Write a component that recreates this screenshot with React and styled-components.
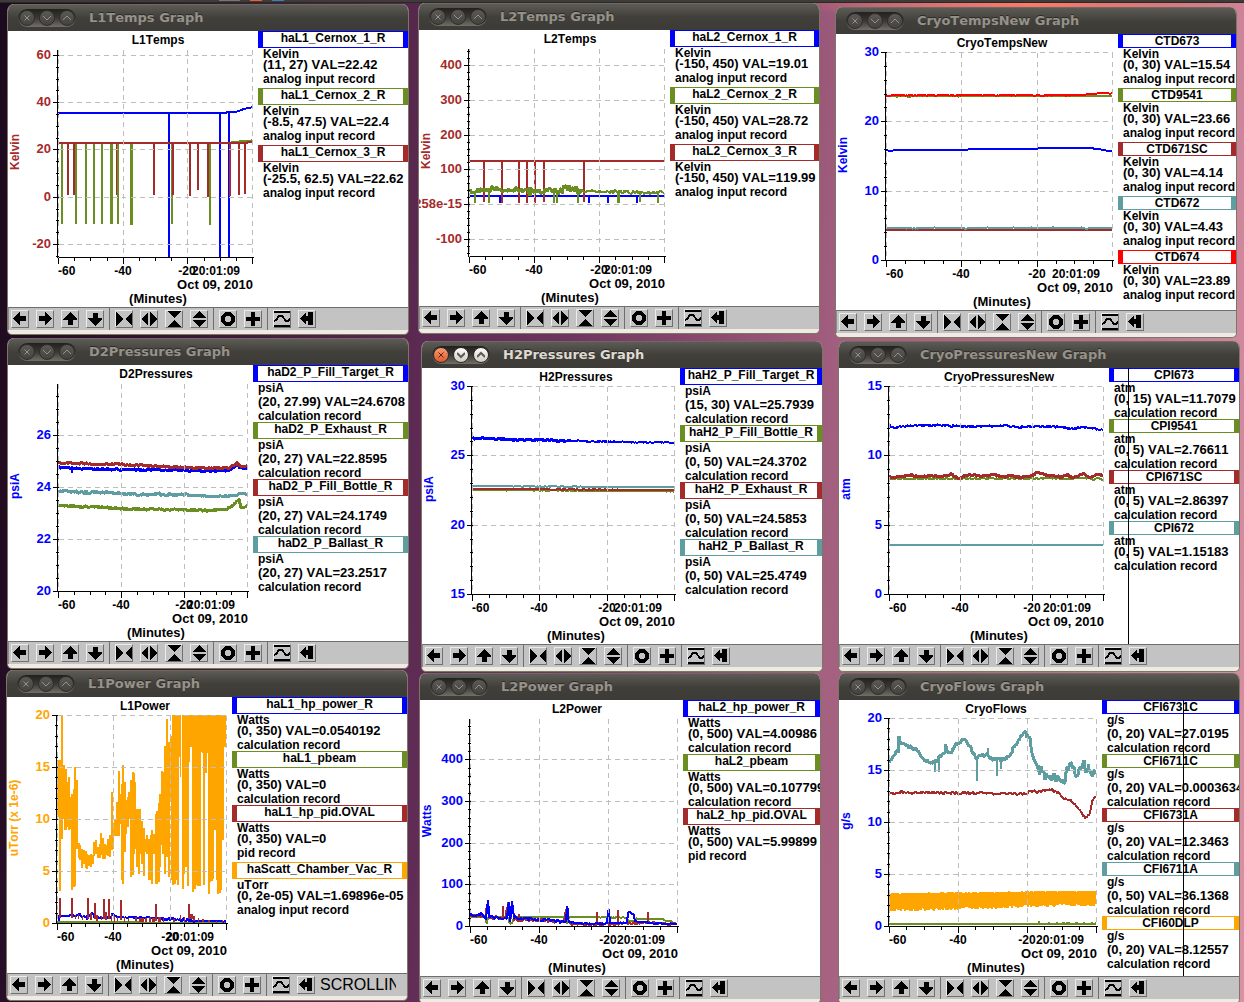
import React from 'react'
import styled, { createGlobalStyle } from 'styled-components';

const BLUE = '#0000ff';
const GREEN = '#6b8e23';
const BROWN = '#a52a2a';
const TEAL = '#5f9ea0';
const RED = '#ff0000';
const ORANGE = '#ffa500';

const CONTENT_WIDTH = 400;
const PLOT_LEFT = 50;
const PLOT_TOP = 18;
const PLOT_BOTTOM = 226;
const BODY_HEIGHT = 276;

// small repeatable noise so the traces look the same on every render
function makeRandom(seed) {
    let s = seed * 7919 + 17;
    return () => {
        s = (s * 1103515245 + 12345) % 2147483648;
        return s / 2147483648;
    };
}

function wiggle(points, noise, seed) {
    const random = makeRandom(seed);
    const out = [];
    for (let i = 0; i < points.length - 1; i++) {
        const [x1, y1] = points[i];
        const [x2, y2] = points[i + 1];
        for (let x = x1; x < x2; x += 3) {
            const y = y1 + ((y2 - y1) * (x - x1)) / (x2 - x1);
            out.push([x, y + (random() * 2 - 1) * noise]);
        }
    }
    out.push(points[points.length - 1]);
    return out;
}

const record = (name, color, unit, value, type) => ({ name, color, unit, value, type });

const AI = 'analog input record';
const CALC = 'calculation record';

// Trace points are stored in thirds of a pixel, `origin` is the plot corner in the same unit.
// bars: [x, top, bottom, width]
const graphs = [
    {
        title: 'L1Temps', left: 7, top: 4, legend: 150, origin: [174, 147],
        axis: { label: 'Kelvin', color: BROWN, min: -25.5, max: 62.5, step: 20, minor: 5 },
        records: [
            record('haL1_Cernox_1_R', BLUE, 'Kelvin', '(11, 27) VAL=22.42', AI),
            record('haL1_Cernox_2_R', GREEN, 'Kelvin', '(-8.5, 47.5) VAL=22.4', AI),
            record('haL1_Cernox_3_R', BROWN, 'Kelvin', '(-25.5, 62.5) VAL=22.62', AI),
        ],
        traces: [
            { color: BLUE, points: [[174, 339], [678, 339], [680, 336], [710, 335], [735, 326], [757, 322]], bars: [[507, 339, 771], [660, 339, 771], [687, 336, 771]] },
            {
                color: GREEN, points: [[174, 429], [694, 429], [696, 425], [740, 424], [757, 421]],
                bars: [[186, 429, 672], [228, 429, 672], [258, 429, 672], [282, 429, 672], [306, 429, 672], [334, 429, 672, 3], [354, 429, 672], [394, 429, 675, 3], [516, 429, 672], [630, 429, 675]],
            },
            {
                color: BROWN, points: [[174, 429], [741, 429], [744, 426], [757, 426]],
                bars: [[204, 429, 585], [222, 429, 585], [350, 429, 585, 1], [462, 429, 585], [519, 429, 585], [570, 429, 588], [594, 429, 570], [624, 429, 590], [690, 429, 588], [717, 429, 585], [735, 429, 582]],
            },
        ],
    },
    {
        title: 'L2Temps', left: 418, top: 3, legend: 149, origin: [162, 144],
        axis: { label: 'Kelvin', color: BROWN, min: -150, max: 450, step: 100, minor: 20, zero: '3.55258e-15' },
        records: [
            record('haL2_Cernox_1_R', BLUE, 'Kelvin', '(-150, 450) VAL=19.01', AI),
            record('haL2_Cernox_2_R', GREEN, 'Kelvin', '(-150, 450) VAL=28.72', AI),
            record('haL2_Cernox_3_R', BROWN, 'Kelvin', '(-150, 450) VAL=119.99', AI),
        ],
        traces: [
            { color: BLUE, points: [[162, 588], [748, 588]], bars: [[255, 588, 608], [522, 588, 608], [580, 588, 608], [666, 588, 608]] },
            { color: BROWN, points: [[162, 483], [748, 483]], bars: [[207, 483, 606], [261, 483, 608], [312, 483, 608], [336, 483, 608], [360, 483, 608], [387, 483, 605], [507, 483, 606]] },
            { color: GREEN, noise: 8, width: 3, points: [[162, 575], [200, 571], [240, 565], [280, 569], [310, 570], [330, 576], [360, 574], [400, 574], [430, 573]], bars: [[180, 575, 608], [222, 572, 608], [416, 572, 608], [426, 572, 608], [345, 562, 588, 4]] },
            { color: GREEN, noise: 13, width: 3, points: [[430, 573], [450, 566], [480, 568], [500, 572]], bars: [[489, 570, 608]] },
            { color: GREEN, noise: 5, points: [[500, 574], [600, 574], [640, 577], [748, 578]], bars: [[609, 574, 608, 3], [674, 576, 605], [730, 577, 610]] },
        ],
    },
    {
        title: 'CryoTempsNew', left: 835, top: 7, legend: 118, origin: [168, 156],
        axis: { label: 'Kelvin', color: BLUE, min: 0, max: 30, step: 10, minor: 2 },
        records: [
            record('CTD673', BLUE, 'Kelvin', '(0, 30) VAL=15.54', AI),
            record('CTD9541', GREEN, 'Kelvin', '(0, 30) VAL=23.66', AI),
            record('CTD671SC', BROWN, 'Kelvin', '(0, 30) VAL=4.14', AI),
            record('CTD672', TEAL, 'Kelvin', '(0, 30) VAL=4.43', AI),
            record('CTD674', RED, 'Kelvin', '(0, 30) VAL=23.89', AI),
        ],
        traces: [
            { color: BLUE, points: [[168, 450], [180, 453], [200, 450], [400, 450], [430, 447], [520, 446], [620, 446], [640, 443], [740, 443], [800, 446], [830, 452], [847, 452]] },
            { color: GREEN, noise: 1, points: [[168, 289], [847, 288]] },
            { color: BROWN, points: [[168, 690], [847, 690]] },
            { color: TEAL, noise: 2, points: [[168, 684], [847, 684]] },
            { color: RED, noise: 1, points: [[168, 288], [190, 286], [750, 286], [775, 283], [820, 279], [847, 281]] },
        ],
    },
    {
        title: 'D2Pressures', left: 7, top: 338, legend: 155, origin: [174, 144],
        axis: { label: 'psiA', color: BLUE, min: 20, max: 27.99, step: 2, minor: 0.5 },
        records: [
            record('haD2_P_Fill_Target_R', BLUE, 'psiA', '(20, 27.99) VAL=24.6708', CALC),
            record('haD2_P_Exhaust_R', GREEN, 'psiA', '(20, 27) VAL=22.8595', CALC),
            record('haD2_P_Fill_Bottle_R', BROWN, 'psiA', '(20, 27) VAL=24.1749', CALC),
            record('haD2_P_Ballast_R', TEAL, 'psiA', '(20, 27) VAL=23.2517', CALC),
        ],
        traces: [
            { color: BLUE, noise: 3, width: 3, points: [[174, 397], [230, 400], [360, 404], [450, 405], [550, 407], [640, 408], [690, 405], [712, 391], [722, 400], [742, 401]], bars: [[216, 396, 413]] },
            { color: GREEN, noise: 3, width: 3, points: [[174, 512], [300, 516], [360, 521], [450, 523], [550, 524], [640, 527], [680, 523], [700, 508], [718, 490], [722, 517], [735, 518], [742, 512]] },
            { color: BROWN, noise: 3, width: 3, points: [[174, 383], [270, 386], [360, 389], [450, 393], [550, 397], [640, 400], [690, 398], [712, 383], [722, 394], [742, 395]] },
            { color: TEAL, noise: 5, width: 3, points: [[174, 469], [300, 472], [360, 476], [450, 478], [560, 480]] },
            { color: TEAL, noise: 2, width: 3, points: [[560, 480], [640, 484], [700, 483], [722, 475], [742, 478]] },
        ],
    },
    {
        title: 'H2Pressures', left: 421, top: 341, legend: 142, origin: [171, 153], active: true,
        axis: { label: 'psiA', color: BLUE, min: 15, max: 30, step: 5, minor: 1 },
        records: [
            record('haH2_P_Fill_Target_R', BLUE, 'psiA', '(15, 30) VAL=25.7939', CALC),
            record('haH2_P_Fill_Bottle_R', GREEN, 'psiA', '(0, 50) VAL=24.3702', CALC),
            record('haH2_P_Exhaust_R', BROWN, 'psiA', '(0, 50) VAL=24.5853', CALC),
            record('haH2_P_Ballast_R', TEAL, 'psiA', '(0, 50) VAL=25.4749', CALC),
        ],
        traces: [
            { color: BLUE, noise: 3, width: 3, points: [[171, 310], [220, 310], [290, 314], [373, 315], [450, 318]] },
            { color: BLUE, noise: 2, points: [[450, 317], [575, 320], [700, 322], [778, 323]] },
            { color: GREEN, noise: 1, points: [[171, 465], [778, 469]] },
            { color: BROWN, noise: 1, points: [[171, 462], [778, 465]] },
            { color: TEAL, noise: 1, points: [[171, 453], [778, 457]] },
        ],
    },
    {
        title: 'CryoPressuresNew', left: 838, top: 341, legend: 130, origin: [177, 153], cursor: 289,
        axis: { label: 'atm', color: BLUE, min: 0, max: 15, step: 5, minor: 1 },
        records: [
            record('CPI673', BLUE, 'atm', '(0, 15) VAL=11.7079', CALC),
            record('CPI9541', GREEN, 'atm', '(0, 5) VAL=2.76611', CALC),
            record('CPI671SC', BROWN, 'atm', '(0, 5) VAL=2.86397', CALC),
            record('CPI672', TEAL, 'atm', '(0, 5) VAL=1.15183', CALC),
        ],
        traces: [
            { color: BLUE, noise: 3, points: [[177, 272], [195, 279], [215, 274], [240, 272], [330, 270], [400, 275], [530, 273], [560, 278], [600, 275], [680, 275], [730, 282], [760, 276], [800, 282], [820, 287]] },
            { color: GREEN, noise: 2, points: [[177, 431], [780, 430], [790, 433], [805, 430], [820, 436]] },
            { color: BROWN, noise: 3, width: 3, points: [[177, 427], [215, 424], [240, 420], [260, 424], [300, 421], [330, 425], [350, 424], [365, 418], [385, 431], [400, 424], [430, 421], [450, 423], [480, 421], [490, 418], [520, 426], [540, 422], [560, 426], [605, 424], [620, 412], [650, 421], [680, 422], [690, 427], [710, 419], [730, 430], [760, 414], [780, 427], [805, 418], [820, 424]] },
            { color: TEAL, points: [[177, 630], [820, 630]] },
        ],
    },
    {
        title: 'L1Power', left: 6, top: 670, legend: 175, origin: [171, 144], status: 'SCROLLIN',
        axis: { label: 'uTorr (x 1e-6)', color: ORANGE, min: 0, max: 20, step: 5, minor: 1 },
        records: [
            record('haL1_hp_power_R', BLUE, 'Watts', '(0, 350) VAL=0.0540192', CALC),
            record('haL1_pbeam', GREEN, 'Watts', '(0, 350) VAL=0', CALC),
            record('haL1_hp_pid.OVAL', BROWN, 'Watts', '(0, 350) VAL=0', 'pid record'),
            record('haScatt_Chamber_Vac_R', ORANGE, 'uTorr', '(0, 2e-05) VAL=1.69896e-05', AI),
        ],
        traces: [
            { color: GREEN, points: [[171, 765], [400, 765], [430, 767], [679, 767]] },
            {
                color: BLUE, noise: 2, points: [[171, 755], [180, 747], [230, 746], [238, 738], [246, 750], [268, 748], [276, 736], [284, 752], [332, 752], [338, 740], [350, 750], [450, 752], [500, 754]],
                bars: [[178, 745, 762], [262, 745, 760]],
            },
            { color: BLUE, noise: 6, points: [[480, 755], [550, 758], [590, 760]] },
            { color: BLUE, noise: 1, points: [[590, 762], [679, 763]] },
            {
                color: BROWN,
                bars: [[180, 693, 752], [216, 693, 752], [264, 693, 755], [285, 708, 755], [311, 697, 755], [326, 697, 755], [362, 699, 760], [468, 711, 762], [567, 711, 755],
                    [225, 745, 755, 1], [236, 740, 757, 1], [248, 748, 760, 1], [272, 738, 760], [291, 744, 762], [303, 748, 760, 1], [318, 736, 758], [334, 740, 762, 1], [344, 748, 764, 1],
                    [352, 750, 762, 1], [372, 750, 764, 1], [384, 754, 764, 1], [408, 750, 762], [420, 752, 764], [426, 752, 764, 3], [438, 754, 766], [450, 750, 764], [460, 752, 766, 3],
                    [478, 750, 764, 3], [490, 752, 766, 1], [510, 750, 760, 1], [522, 756, 765], [542, 744, 758, 1], [554, 750, 764, 1], [574, 742, 755, 3], [582, 748, 762, 2],
                    [596, 753, 764, 1], [610, 757, 765, 2], [628, 760, 766, 2], [650, 761, 767, 1], [668, 760, 767, 1]],
            },
            {
                color: ORANGE,
                bars: [[174, 280, 450], [180, 280, 671], [183, 300, 500], [186, 144, 515], [190, 295, 455, 3], [197, 305, 490, 3], [202, 345, 480], [207, 330, 490], [213, 390, 485], [217, 380, 669], [221, 365, 660], [225, 300, 656], [231, 338, 545],
                    [236, 528, 573], [241, 535, 580], [246, 545, 602], [252, 550, 590], [257, 552, 603], [262, 560, 605], [268, 565, 598], [273, 560, 600], [278, 565, 590], [283, 525, 568], [288, 520, 560], [293, 540, 572], [299, 530, 572],
                    [304, 497, 565], [309, 512, 576], [314, 532, 576], [319, 535, 564], [325, 515, 566], [330, 505, 570], [335, 376, 550], [339, 468, 546], [344, 460, 508], [350, 405, 508], [357, 312, 508], [362, 380, 470], [366, 350, 640], [369, 295, 650],
                    [374, 345, 555], [379, 400, 500], [383, 390, 480], [387, 375, 455], [392, 340, 630], [398, 314, 625], [402, 318, 560], [406, 345, 545], [411, 425, 600], [416, 425, 622], [421, 425, 560], [427, 462, 590], [431, 482, 626],
                    [437, 515, 555], [442, 505, 560], [446, 515, 638], [452, 505, 640], [457, 490, 650], [462, 500, 560], [467, 440, 650], [472, 432, 652], [476, 408, 645], [480, 380, 600], [485, 312, 535], [489, 315, 560], [494, 238, 620],
                    [498, 240, 440], [502, 155, 570], [506, 225, 630], [512, 208, 390], [516, 246, 640], [520, 144, 655], [524, 144, 650], [529, 144, 640], [534, 144, 655], [538, 144, 270], [542, 144, 330, 1], [548, 144, 665], [553, 144, 620],
                    [558, 144, 600], [563, 144, 656], [567, 144, 285], [573, 144, 240, 3], [579, 144, 675], [584, 144, 665], [589, 144, 655], [594, 144, 656], [599, 144, 656], [604, 144, 256], [608, 144, 258], [612, 144, 655],
                    [617, 144, 318], [622, 144, 258], [627, 144, 680], [631, 144, 645], [636, 144, 642], [640, 144, 635], [645, 144, 490], [650, 144, 640], [655, 144, 680], [660, 144, 678], [664, 144, 668], [668, 144, 520], [672, 144, 240], [676, 144, 240], [680, 205, 240]],
            },
        ],
    },
    {
        title: 'L2Power', left: 419, top: 673, legend: 137, origin: [165, 153],
        axis: { label: 'Watts', color: BLUE, min: 0, max: 499, step: 100, minor: 20 },
        records: [
            record('haL2_hp_power_R', BLUE, 'Watts', '(0, 500) VAL=4.00986', CALC),
            record('haL2_pbeam', GREEN, 'Watts', '(0, 500) VAL=0.107799', CALC),
            record('haL2_hp_pid.OVAL', BROWN, 'Watts', '(0, 500) VAL=5.99899', 'pid record'),
        ],
        traces: [
            { color: GREEN, noise: 1, points: [[165, 750], [210, 750], [215, 770], [220, 750], [278, 750], [285, 770], [292, 768], [298, 750], [450, 750], [456, 770], [462, 750], [575, 751], [635, 752], [640, 762], [660, 762], [664, 755], [745, 756], [752, 762], [770, 763], [776, 770], [787, 770]] },
            { color: BROWN, noise: 5, points: [[165, 746], [200, 748], [212, 750], [216, 708], [224, 750], [270, 754], [280, 710], [286, 760], [291, 708], [298, 758], [360, 758], [445, 765], [454, 728], [462, 768], [520, 772], [640, 770], [690, 764], [720, 769], [787, 771]], bars: [[264, 718, 755], [312, 742, 765], [546, 735, 770], [608, 730, 770], [698, 735, 768]] },
            { color: BLUE, noise: 5, points: [[165, 745], [200, 742], [213, 755], [219, 696], [223, 747], [240, 752], [275, 752], [281, 709], [285, 765], [291, 701], [297, 752], [320, 756], [360, 758], [400, 760], [445, 764]] },
            { color: BLUE, noise: 2, points: [[445, 765], [452, 765], [457, 718], [461, 766], [520, 770], [575, 770], [581, 728], [585, 768], [635, 768], [640, 735], [655, 742], [660, 762], [690, 765], [720, 770], [787, 771]] },
        ],
    },
    {
        title: 'CryoFlows', left: 838, top: 673, legend: 137, origin: [177, 153], cursor: 344,
        axis: { label: 'g/s', color: BLUE, min: 0, max: 20, step: 5, minor: 1 },
        records: [
            record('CFI6731C', BLUE, 'g/s', '(0, 20) VAL=27.0195', CALC),
            record('CFI6711C', GREEN, 'g/s', '(0, 20) VAL=0.00036341', CALC),
            record('CFI6731A', BROWN, 'g/s', '(0, 20) VAL=12.3463', CALC),
            record('CFI6711A', TEAL, 'g/s', '(0, 50) VAL=36.1368', CALC),
            record('CFI60DLP', ORANGE, 'g/s', '(0, 20) VAL=8.12557', CALC),
        ],
        traces: [
            { color: GREEN, points: [[177, 771], [800, 771]], bars: [[627, 763, 770], [657, 764, 770], [682, 764, 770], [700, 764, 770, 3], [713, 764, 770, 4], [740, 764, 770, 3], [762, 764, 770], [786, 764, 770], [798, 766, 770]] },
            { color: BROWN, noise: 4, points: [[177, 376], [190, 381], [210, 376], [400, 378], [500, 379], [590, 380], [605, 371], [620, 374], [665, 369], [690, 380], [700, 392], [718, 396], [735, 415], [750, 430], [765, 454], [778, 440], [788, 400], [800, 388]] },
            {
                color: TEAL, noise: 6, width: 3,
                points: [[177, 286], [200, 250], [204, 254], [207, 214], [213, 232], [220, 228], [240, 240], [265, 250], [280, 275], [300, 286], [316, 286], [328, 270], [345, 262], [347, 236], [355, 264], [365, 255], [380, 228], [403, 220], [410, 230], [420, 240], [437, 273], [455, 265], [475, 262], [480, 275], [500, 275], [515, 280], [540, 268], [550, 240], [565, 220], [580, 200], [585, 196], [592, 208], [600, 215], [606, 260], [615, 290], [625, 300], [628, 322], [635, 298]],
                bars: [[315, 280, 314], [326, 270, 314], [442, 270, 342], [501, 270, 328], [474, 244, 270], [512, 270, 306]],
            },
            { color: TEAL, noise: 12, width: 3, points: [[635, 300], [645, 328], [655, 335], [665, 336], [672, 322], [678, 340], [688, 328], [693, 345], [706, 335], [710, 290], [715, 300], [722, 290], [730, 300], [738, 330], [750, 305], [762, 292], [768, 315], [775, 303], [785, 322], [800, 316]] },
            { color: ORANGE, band: { from: 177, to: 800, top: [678, 670], bottom: [732, 713] } },
        ],
    },
];

function bandPath({ from, to, top, bottom }) {
    const random = makeRandom(5);
    let d = '';
    for (let x = from; x <= to; x += 3) {
        const k = (x - from) / (to - from);
        const y1 = top[0] + (top[1] - top[0]) * k + random() * 3;
        const y2 = bottom[0] + (bottom[1] - bottom[0]) * k - random() * 9 + 3;
        d += `M${x} ${y1}V${y2}`;
    }
    return d;
}

function Trace({ trace, seed }) {
    const width = (trace.width || 2) * 3;
    const points = trace.points && (trace.noise ? wiggle(trace.points, trace.noise, seed) : trace.points);
    return (
        <g stroke={trace.color} fill="none">
            {points && <path strokeWidth={width} strokeLinejoin="bevel" d={'M' + points.map((p) => p.join(' ')).join('L')} />}
            {(trace.bars || []).map(([x, y1, y2, w = 2], i) => (
                <path key={i} strokeWidth={w * 3} d={`M${x} ${y1}V${y2}`} />
            ))}
            {trace.band && <path strokeWidth="6" d={bandPath(trace.band)} />}
        </g>
    )
}

function Chart({ graph }) {
    const { axis, origin, title } = graph;
    const width = CONTENT_WIDTH - graph.legend;
    const right = width - 6;
    const middle = Math.round((PLOT_LEFT + right) / 2);
    const scale = (PLOT_BOTTOM - PLOT_TOP) / (axis.max - axis.min);
    const toY = (v) => Math.round(PLOT_BOTTOM - (v - axis.min) * scale);
    const toX = (i, parts) => Math.round(PLOT_LEFT + ((right - PLOT_LEFT) * i) / parts);

    const minors = [];
    for (let i = Math.ceil(axis.min / axis.minor); i * axis.minor <= axis.max; i++) minors.push(i * axis.minor);
    const majors = minors.filter((v) => v % axis.step === 0);

    return (
        <ChartSvg width={width} height={BODY_HEIGHT} role="img" aria-label={title + ' chart'}>
            <ChartText x={middle + 3} y="13" $anchor="middle">{title}</ChartText>

            <svg x={PLOT_LEFT} y={PLOT_TOP} width={right - PLOT_LEFT} height={PLOT_BOTTOM - PLOT_TOP}>
                <g transform={`scale(${1 / 3}) translate(${-origin[0]} ${-origin[1]})`} shapeRendering="crispEdges">
                    {graph.traces.map((trace, i) => <Trace key={i} trace={trace} seed={i + 1} />)}
                </g>
            </svg>

            <Grid>
                {majors.map((v) => <path key={v} d={`M${PLOT_LEFT} ${toY(v)}H${right}`} />)}
                {[0, 1, 2, 3].map((i) => <path key={i} d={`M${toX(i, 3)} ${PLOT_TOP}V${PLOT_BOTTOM}`} />)}
            </Grid>

            <Axis>
                <path d={`M${PLOT_LEFT - 1} ${PLOT_TOP}V${PLOT_BOTTOM}M${PLOT_LEFT} ${PLOT_BOTTOM}H${right + 1}`} />
                {minors.map((v) => <path key={v} d={`M${PLOT_LEFT - 3} ${toY(v)}h3`} />)}
                {majors.map((v) => <path key={v} d={`M${PLOT_LEFT - 6} ${toY(v)}h6`} />)}
                {Array.from({ length: 13 }, (_, i) => (
                    <path key={i} d={`M${toX(i, 12)} ${PLOT_BOTTOM}v${i % 4 ? 3 : 6}`} />
                ))}
            </Axis>

            {majors.map((v) => (
                <ChartText key={v} x={PLOT_LEFT - 7} y={toY(v) + 4} $anchor="end" $color={axis.color} $size={13}>
                    {v === 0 && axis.zero ? axis.zero : v}
                </ChartText>
            ))}
            <ChartText $anchor="middle" $color={axis.color} transform="translate(11 121) rotate(-90)">{axis.label}</ChartText>

            <ChartText x={PLOT_LEFT} y="244">-60</ChartText>
            <ChartText x={toX(1, 3)} y="244" $anchor="middle">-40</ChartText>
            <ChartText x={toX(2, 3)} y="244" $anchor="middle">-20</ChartText>
            <ChartText x={right - 36} y="244" $anchor="middle">20:01:09</ChartText>
            <ChartText x={right + 1} y="258" $anchor="end" $size={13}>Oct 09, 2010</ChartText>
            <ChartText x={middle + 3} y="272" $anchor="middle" $size={13}>(Minutes)</ChartText>
        </ChartSvg>
    )
}

// lines with descenders take three pixels more
const hasTail = (text) => /[gjpqy_]/.test(text);

function Legend({ graph }) {
    return (
        <LegendStyled $width={graph.legend}>
            {graph.records.map((r) => (
                <li key={r.name}>
                    <RecordName $color={r.color} $tall={hasTail(r.name)}>{r.name}</RecordName>
                    <RecordLine $height={hasTail(r.unit) ? 14 : 11}>{r.unit}</RecordLine>
                    <RecordValue>{r.value}</RecordValue>
                    <RecordLine $height={hasTail(r.type) ? 15 : 12}>{r.type}</RecordLine>
                </li>
            ))}
        </LegendStyled>
    )
}

const toolGroups = [
    [
        ['Scroll left', <path d="M1 7.500L7 1H8V5H14V10H8V14H7z" />],
        ['Scroll right', <path d="M15 7.500L9 1H8V5H2V10H8V14H9z" />],
        ['Scroll up', <path d="M8 1L1 8V9H6V14H11V9H15V8z" />],
        ['Scroll down', <path d="M8 15L1 8V7H6V2H11V7H15V8z" />],
    ],
    [
        ['Zoom out horizontally', <path d="M0 1L7 8L0 15zM16 1L9 8L16 15z" />],
        ['Zoom in horizontally', <path d="M7 1L0 8L7 15zM9 1L16 8L9 15z" />],
        ['Zoom out vertically', <path d="M1 0H15L8 7zM1 16H15L8 9z" />],
        ['Zoom in vertically', <path d="M8 0L15 7H1zM8 16L15 9H1z" />],
    ],
    [
        ['Reset', <circle cx="8" cy="8" r="5" fill="none" stroke="#000" strokeWidth="4" />],
        ['Add', <path d="M6 1H10V6H15V10H10V15H6V10H1V6H6z" />],
    ],
    [
        ['Autoscale', <><path d="M0 0H17V2H0zM0 14H17V16H0z" /><path d="M0 10L2 9L5 5H8L12 10H14L17 7" fill="none" stroke="#000" strokeWidth="2" /></>],
        ['Jump to latest', <path d="M1 7.500L7 1V5H9V1H14V14H9V10H7V14z" />],
    ],
];

function Toolbar({ status }) {
    return (
        <ToolbarStyled>
            {toolGroups.map((group, i) => (
                <ToolGroup key={i}>
                    {group.map(([label, icon]) => (
                        <ToolButton key={label} type="button" aria-label={label}>
                            <svg width="16" height="16" aria-hidden="true">{icon}</svg>
                        </ToolButton>
                    ))}
                </ToolGroup>
            ))}
            {status && <Status>{status}</Status>}
        </ToolbarStyled>
    )
}

function GraphWindow({ graph }) {
    return (
        <WindowStyled $left={graph.left} $top={graph.top}>
            <TitleBar $active={graph.active}>
                <WindowControls>
                    <ControlButton type="button" aria-label="Close" $active={graph.active} $close>
                        <svg width="8" height="8" aria-hidden="true"><path d="M1.500 1.500L6.500 6.500M6.500 1.500L1.500 6.500" /></svg>
                    </ControlButton>
                    <ControlButton type="button" aria-label="Minimize" $active={graph.active}>
                        <svg width="8" height="8" aria-hidden="true"><path d="M0 2L4 6L8 2" /></svg>
                    </ControlButton>
                    <ControlButton type="button" aria-label="Maximize" $active={graph.active}>
                        <svg width="8" height="8" aria-hidden="true"><path d="M0 6L4 2L8 6" /></svg>
                    </ControlButton>
                </WindowControls>
                <h2>{graph.title} Graph</h2>
            </TitleBar>
            <Body>
                <Chart graph={graph} />
                <Legend graph={graph} />
                {graph.cursor && <CursorLine $x={graph.cursor} />}
            </Body>
            <Toolbar status={graph.status} />
        </WindowStyled>
    )
}

function App() {
    return (
        <>
            <GlobalStyle />
            <Desktop>
                <Panel><PanelIcon $color="#77756f" $size={21} /><PanelIcon $color="#e8622a" $size={12} /><PanelIcon $color="#3d7fb5" $size={12} /></Panel>
                {graphs.map((graph) => <GraphWindow key={graph.title} graph={graph} />)}
            </Desktop>
        </>
    )
}

const GlobalStyle = createGlobalStyle`
    *{
        margin: 0;
        padding: 0;
        box-sizing: border-box;
    }
    body{
        font-family: "Liberation Sans", Arial, sans-serif;
        font-size: 12px;
        font-weight: bold;
        font-kerning: none;
        color: #000;
    }
`;

const Desktop = styled.main`
    position: relative;
    min-height: 100vh;
    overflow: hidden;
    background:
        radial-gradient(ellipse 240px 16px at 1030px 4px, #ff7a68, transparent),
        linear-gradient(95deg, #1c0a1e 0%, #32122e 12%, #5c2a52 34%, #6e3460 45%, #a4607f 66%, #b8708c 84%, #d892a4 100%);
`;

const Panel = styled.div`
    height: 3px;
    display: flex;
    gap: 10px;
    padding-left: 219px;
    background: #3d3c38;
    border-bottom: 1px solid #2a2926;
`;

const PanelIcon = styled.span`
    width: ${(props) => props.$size}px;
    height: 1px;
    background: ${(props) => props.$color};
`;

const WindowStyled = styled.section`
    position: absolute;
    left: ${(props) => props.$left}px;
    top: ${(props) => props.$top}px;
    width: 402px;
    overflow: hidden;
    background: #efebe3;
    border: solid #7d7566;
    border-width: 0 1px 1px;
    border-radius: 7px 7px 5px 5px;
    padding-bottom: 4px;
`;

const TitleBar = styled.header`
    height: 27px;
    display: flex;
    align-items: center;
    gap: 13px;
    padding-left: 10px;
    border-top: 1px solid #6e6a60;
    background: linear-gradient(#5c5b55, #403f3a 50%, #3c3b37);
    h2{
        font-family: "DejaVu Sans", sans-serif;
        font-size: 13px;
        line-height: 16px;
        color: ${(props) => (props.$active ? '#dfdbd2' : '#96928a')};
        text-shadow: 0 -1px 0 #2c2b28;
    }
`;

const WindowControls = styled.div`
    display: flex;
    gap: 4px;
    padding: 1px;
    border-radius: 9px;
    background: linear-gradient(#22211e, #3a3935 50%, #716f67);
`;

const ControlButton = styled.button`
    width: 16px;
    height: 16px;
    display: flex;
    align-items: center;
    justify-content: center;
    border: 1px solid #2f2e2b;
    border-radius: 50%;
    background: ${(props) => (!props.$active ? 'linear-gradient(#5a5954, #44433f)' : props.$close ? 'linear-gradient(#f79a72, #e2592b)' : 'linear-gradient(#fffefb, #cfcac0)')};
    svg{
        fill: none;
        stroke: ${(props) => (!props.$active ? '#96928a' : props.$close ? '#5a2412' : '#5c5a54')};
        stroke-width: ${(props) => (props.$active && !props.$close ? 2 : 1)};
    }
`;

const Body = styled.div`
    position: relative;
    display: flex;
    min-height: ${BODY_HEIGHT}px;
    overflow: hidden;
    background: #fff;
`;

const CursorLine = styled.div`
    position: absolute;
    top: 0;
    bottom: 0;
    left: ${(props) => props.$x}px;
    width: 1px;
    background: #000;
`;

const ChartSvg = styled.svg`
    flex: none;
    display: block;
    overflow: hidden;
`;

const ChartText = styled.text`
    font-size: ${(props) => props.$size || 12}px;
    fill: ${(props) => props.$color || '#000'};
    text-anchor: ${(props) => props.$anchor || 'start'};
`;

const Grid = styled.g`
    transform: translate(0.5px, 0.5px);
    fill: none;
    stroke: #bebebe;
    stroke-dasharray: 5 4;
    shape-rendering: crispEdges;
`;

const Axis = styled.g`
    transform: translate(0.5px, 0.5px);
    fill: none;
    stroke: #000;
    shape-rendering: crispEdges;
`;

const LegendStyled = styled.ul`
    flex: none;
    width: ${(props) => props.$width}px;
    list-style: none;
    white-space: nowrap;
`;

const RecordName = styled.h3`
    height: ${(props) => (props.$tall ? 17 : 14)}px;
    border: solid ${(props) => props.$color};
    border-width: 1px 5px;
    display: flex;
    justify-content: center;
    font-size: 12px;
    line-height: 12px;
`;

const RecordLine = styled.p`
    height: ${(props) => props.$height}px;
    padding-left: 5px;
    line-height: 12px;
`;

const RecordValue = styled.p`
    height: 14px;
    padding-left: 5px;
    font-size: 13px;
    line-height: 11px;
`;

const ToolbarStyled = styled.footer`
    height: 23px;
    display: flex;
    padding-left: 2px;
    overflow: hidden;
    background: #c3c3c3;
    border-top: 1px solid #6e6e6e;
    border-left: 1px solid #8c8c8c;
`;

const ToolGroup = styled.div`
    display: flex;
    align-items: center;
    gap: 7px;
    padding-right: 5px;
    margin-right: 5px;
    border-right: 1px solid #6e6e6e;
    &:nth-child(4){
        border: none;
        margin: 0;
    }
`;

const ToolButton = styled.button`
    width: 18px;
    height: 18px;
    border: 1px solid;
    border-color: #ececec #707070 #707070 #ececec;
    background: #c3c3c3;
    svg{
        display: block;
        shape-rendering: crispEdges;
    }
`;

const Status = styled.output`
    width: 76px;
    overflow: hidden;
    font-size: 16px;
    font-weight: normal;
    line-height: 22px;
`;

export default App;
